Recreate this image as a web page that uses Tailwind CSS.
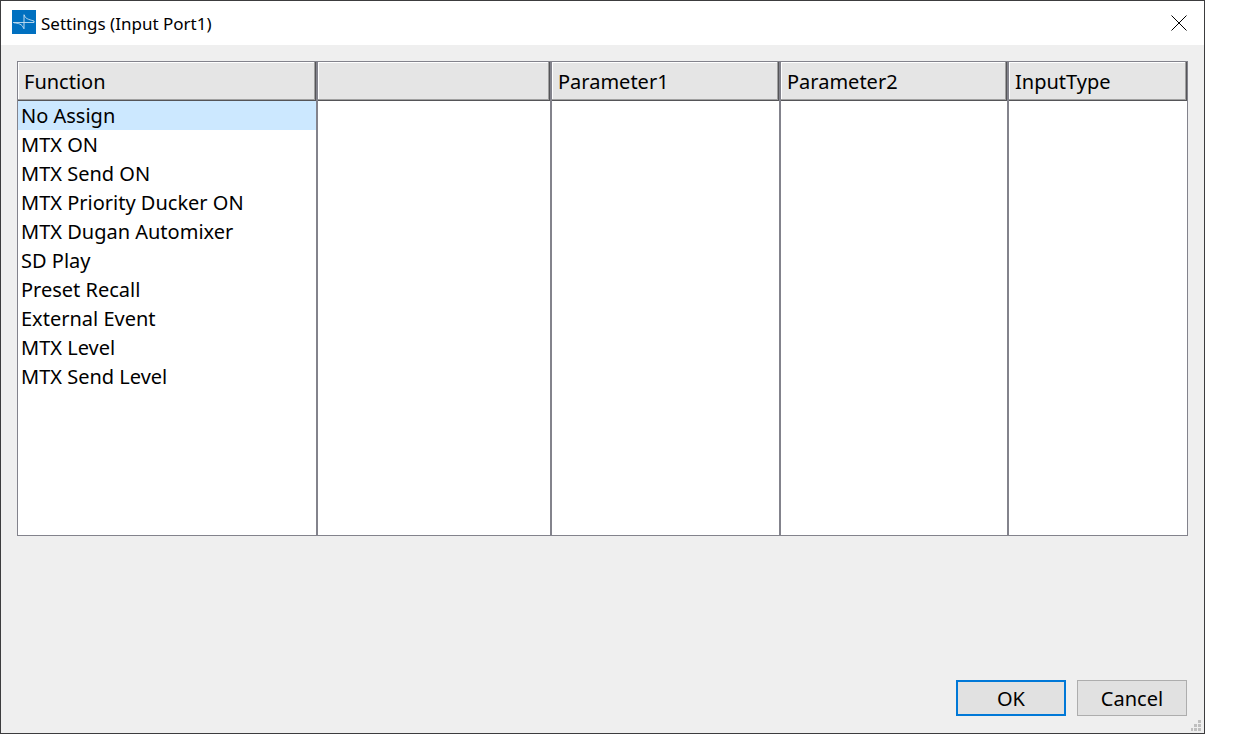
<!DOCTYPE html>
<html lang="en">

<head>
    <meta charset="UTF-8">
    <meta name="viewport" content="width=device-width, initial-scale=1.0">
    <script src="https://cdn.jsdelivr.net/npm/@tailwindcss/browser@4"></script>
    <title>Settings (Input Port1)</title>
</head>

<body class="min-h-screen flex bg-white pr-[38px] font-['Noto_Sans',sans-serif] text-black">
    <div role="dialog" aria-labelledby="dialog-title"
        class="relative flex-1 flex flex-col border border-[#3c3c3e] bg-[#efefef]">
        <!-- Title bar -->
        <header class="flex items-center h-11 pl-[11px] pr-4 bg-white">
            <svg class="w-6 h-6 shrink-0 mb-[2px]" viewBox="0 0 24 24" fill="none" aria-hidden="true">
                <rect width="24" height="24" fill="#0070c0" />
                <path d="M12 4.500V19" stroke="#d5e8f5" stroke-width="0.9" />
                <path d="M1 12.500H22M2 12.800C6 13.200 10.500 14 11.600 18.500M12.300 5C13 8.500 16 9.300 22 11V12.500"
                    stroke="#c5dff1" stroke-width="0.9" />
            </svg>
            <h1 id="dialog-title" class="ml-[5px] pt-px text-[17px] leading-6">Settings (Input Port1)</h1>
            <button type="button" id="close" aria-label="Close" class="ml-auto mr-px w-4 h-4">
                <svg class="block w-4 h-4" viewBox="0 0 16 16" fill="none" stroke="#000" stroke-width="1">
                    <path d="M0.500 0.500L15.500 15.500M15.500 0.500L0.500 15.500" />
                </svg>
            </button>
        </header>

        <main class="flex-1 flex flex-col px-4 pt-4 pb-[17px]">
            <!-- Columns -->
            <div class="grid grid-cols-[300fr_234fr_229fr_228fr_178fr] min-h-[475px] border border-[#83838c] bg-white text-[20px]">
                <section class="border-r-2 border-[#83838c]">
                    <h2 class="h-[39px] px-[6px] bg-[#e5e5e5] leading-[39px] shadow-[inset_-1px_-1px_#555558,inset_-2px_-2px_#a0a0a0,inset_1px_1px_#fff]">Function</h2>
                    <ul id="functions">
                        <li><button type="button" aria-pressed="true" class="block w-full h-[29px] px-[3px] text-left leading-[29px] aria-pressed:bg-[#cce8ff]">No Assign</button></li>
                        <li><button type="button" aria-pressed="false" class="block w-full h-[29px] px-[3px] text-left leading-[29px] aria-pressed:bg-[#cce8ff]">MTX ON</button></li>
                        <li><button type="button" aria-pressed="false" class="block w-full h-[29px] px-[3px] text-left leading-[29px] aria-pressed:bg-[#cce8ff]">MTX Send ON</button></li>
                        <li><button type="button" aria-pressed="false" class="block w-full h-[29px] px-[3px] text-left leading-[29px] aria-pressed:bg-[#cce8ff]">MTX Priority Ducker ON</button></li>
                        <li><button type="button" aria-pressed="false" class="block w-full h-[29px] px-[3px] text-left leading-[29px] aria-pressed:bg-[#cce8ff]">MTX Dugan Automixer</button></li>
                        <li><button type="button" aria-pressed="false" class="block w-full h-[29px] px-[3px] text-left leading-[29px] aria-pressed:bg-[#cce8ff]">SD Play</button></li>
                        <li><button type="button" aria-pressed="false" class="block w-full h-[29px] px-[3px] text-left leading-[29px] aria-pressed:bg-[#cce8ff]">Preset Recall</button></li>
                        <li><button type="button" aria-pressed="false" class="block w-full h-[29px] px-[3px] text-left leading-[29px] aria-pressed:bg-[#cce8ff]">External Event</button></li>
                        <li><button type="button" aria-pressed="false" class="block w-full h-[29px] px-[3px] text-left leading-[29px] aria-pressed:bg-[#cce8ff]">MTX Level</button></li>
                        <li><button type="button" aria-pressed="false" class="block w-full h-[29px] px-[3px] text-left leading-[29px] aria-pressed:bg-[#cce8ff]">MTX Send Level</button></li>
                    </ul>
                </section>
                <section class="border-r-2 border-[#83838c]">
                    <div class="h-[39px] bg-[#e5e5e5] shadow-[inset_-1px_-1px_#555558,inset_-2px_-2px_#a0a0a0,inset_1px_1px_#fff]"></div>
                </section>
                <section class="border-r-2 border-[#83838c]">
                    <h2 class="h-[39px] px-[6px] bg-[#e5e5e5] leading-[39px] shadow-[inset_-1px_-1px_#555558,inset_-2px_-2px_#a0a0a0,inset_1px_1px_#fff]">Parameter1</h2>
                </section>
                <section class="border-r-2 border-[#83838c]">
                    <h2 class="h-[39px] px-[6px] bg-[#e5e5e5] leading-[39px] shadow-[inset_-1px_-1px_#555558,inset_-2px_-2px_#a0a0a0,inset_1px_1px_#fff]">Parameter2</h2>
                </section>
                <section>
                    <h2 class="h-[39px] px-[6px] bg-[#e5e5e5] leading-[39px] shadow-[inset_-1px_-1px_#555558,inset_-2px_-2px_#a0a0a0,inset_1px_1px_#fff]">InputType</h2>
                </section>
            </div>

            <!-- Buttons -->
            <div class="mt-auto mr-px flex justify-end gap-[11px] text-[20px]">
                <button type="button" id="ok" class="w-[110px] h-9 pt-[2px] border-2 border-[#0078d7] bg-[#e1e1e1] leading-[30px]">OK</button>
                <button type="button" id="cancel" class="w-[110px] h-9 pt-[2px] border border-[#adadad] bg-[#e1e1e1] leading-8">Cancel</button>
            </div>
        </main>

        <!-- Resize grip -->
        <svg class="absolute right-[3px] bottom-[2px] w-[10px] h-[11px]" viewBox="0 0 10 11" fill="#bfbfbf" aria-hidden="true">
            <path d="M7 0h3v3h-3zM3 4h3v3h-3zM7 4h3v3h-3zM0 8h2v3h-2zM3 8h3v3h-3zM7 8h3v3h-3z" />
        </svg>
    </div>

    <script>
        // Select a function
        const items = document.querySelectorAll("#functions button");
        items.forEach((item) => {
            item.addEventListener("click", () => {
                items.forEach((other) => other.setAttribute("aria-pressed", other === item));
            });
        });
    </script>
</body>

</html>
